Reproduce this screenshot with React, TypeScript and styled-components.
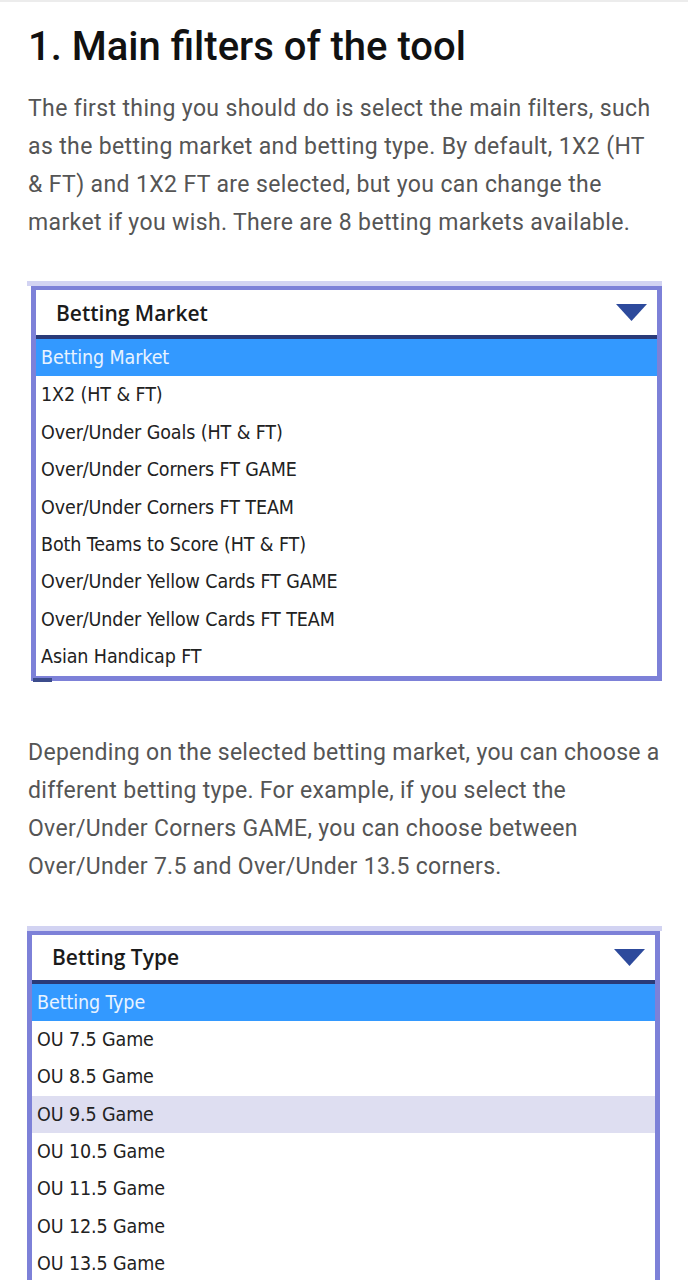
import styled, { createGlobalStyle } from "styled-components";

const GlobalStyle = createGlobalStyle`
  body {
    margin: 0;
    background: #ffffff;
  }
`;

const Page = styled.div`
  border-top: 2px solid #ececec;
  padding: 0 26px 0 27px;
`;

const Title = styled.h1`
  margin: 21px 0 0 1px;
  font-family: Roboto, "Liberation Sans", sans-serif;
  font-weight: 500;
  font-size: 40px;
  line-height: 48px;
  color: #111;
`;

const Text = styled.p<{ $top: number; $spacing: number }>`
  margin: ${(p) => p.$top}px 0 0 1px;
  font-family: Roboto, "Liberation Sans", sans-serif;
  font-size: 23px;
  line-height: 38px;
  letter-spacing: ${(p) => p.$spacing}px;
  color: #555;
`;

const Frame = styled.div<{ $top: number }>`
  margin-top: ${(p) => p.$top}px;
  border-top: 5px solid #d2d3f2;
`;

const Box = styled.div<{ $left: number; $right: number }>`
  margin: 0 ${(p) => p.$right}px 0 ${(p) => p.$left}px;
  border: 5px solid #7d81d8;
  border-top-width: 4px;
  background: #fff;
`;

const Header = styled.div<{ $pad: number }>`
  display: flex;
  align-items: center;
  justify-content: space-between;
  height: 45px;
  padding: 0 10px 0 ${(p) => p.$pad}px;
  border-bottom: 4px solid #2a3a78;
  font-family: "Open Sans", sans-serif;
  font-weight: 600;
  font-size: 21px;
  color: #1b1b1b;
`;

const Row = styled.div<{ $tone?: "selected" | "hover" }>`
  height: 37.4px;
  line-height: 37px;
  padding-left: 5px;
  font-family: "DejaVu Sans", sans-serif;
  font-stretch: condensed;
  font-size: 19.5px;
  letter-spacing: -0.1px;
  white-space: nowrap;
  color: ${(p) => (p.$tone === "selected" ? "#e8f3ff" : "#222")};
  background: ${(p) =>
    p.$tone === "selected" ? "#3399ff" : p.$tone === "hover" ? "#dedef1" : "#fff"};
`;

const ScrollMark = styled.div`
  width: 19px;
  height: 4px;
  margin: -3px 0 0 6px;
  background: #3c4c8c;
`;

function Arrow() {
  return (
    <svg width="31" height="17" viewBox="0 0 31 17">
      <polygon points="0,0 31,0 15.5,17" fill="#2d4a9c" />
    </svg>
  );
}

type SelectProps = {
  label: string;
  options: string[];
  hover?: number;
  top: number;
  left: number;
  right: number;
  pad: number;
  mark?: boolean;
};

function FakeSelect({ label, options, hover, top, left, right, pad, mark }: SelectProps) {
  return (
    <Frame $top={top}>
      <Box $left={left} $right={right}>
        <Header $pad={pad}>
          <span>{label}</span>
          <Arrow />
        </Header>
        <Row $tone="selected">{label}</Row>
        {options.map((o, i) => (
          <Row key={o} $tone={i === hover ? "hover" : undefined}>
            {o}
          </Row>
        ))}
      </Box>
      {mark ? <ScrollMark /> : null}
    </Frame>
  );
}

const markets = [
  "1X2 (HT & FT)",
  "Over/Under Goals (HT & FT)",
  "Over/Under Corners FT GAME",
  "Over/Under Corners FT TEAM",
  "Both Teams to Score (HT & FT)",
  "Over/Under Yellow Cards FT GAME",
  "Over/Under Yellow Cards FT TEAM",
  "Asian Handicap FT",
];

const types = [
  "OU 7.5 Game",
  "OU 8.5 Game",
  "OU 9.5 Game",
  "OU 10.5 Game",
  "OU 11.5 Game",
  "OU 12.5 Game",
  "OU 13.5 Game",
];

export default function App() {
  return (
    <Page>
      <GlobalStyle />
      <Title>1. Main filters of the tool</Title>
      <Text $top={19} $spacing={0.37}>
        The first thing you should do is select the main filters, such as the betting market and
        betting type. By default, 1X2 (HT &amp; FT) and 1X2 FT are selected, but you can change the
        market if you wish. There are 8 betting markets available.
      </Text>
      <FakeSelect
        label="Betting Market"
        options={markets}
        top={39}
        left={4}
        right={0}
        pad={20}
        mark
      />
      <Text $top={52} $spacing={0.3}>
        Depending on the selected betting market, you can choose a different betting type. For
        example, if you select the Over/Under Corners GAME, you can choose between Over/Under 7.5
        and Over/Under 13.5 corners.
      </Text>
      <FakeSelect label="Betting Type" options={types} hover={2} top={40} left={0} right={2} pad={20} />
    </Page>
  );
}
